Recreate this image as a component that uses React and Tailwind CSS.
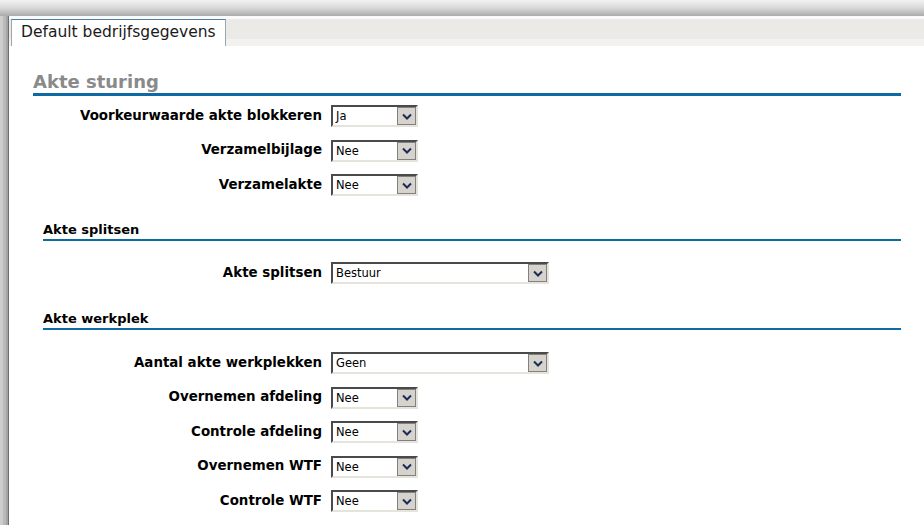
const font = { fontFamily: '"DejaVu Sans", Verdana, sans-serif' };

function Chevron() {
  return (
    <svg width="10" height="7" viewBox="0 0 10 7">
      <path d="M1 1.5 L5 5.5 L9 1.5" fill="none" stroke="#1c2c58" strokeWidth="2" />
    </svg>
  );
}

function Dropdown({ value, wide }) {
  return (
    <div
      className={`flex h-[22px] shrink-0 ${wide ? "w-[218px]" : "w-[87px]"} border-2 border-t-[#4a4a4a] border-l-[#4a4a4a] border-r-[#e6e3dc] border-b-[#e6e3dc] bg-white`}
    >
      <div className="flex-1 pl-[3px] text-[11.5px] leading-[18px] text-black">{value}</div>
      <div className="flex w-[19px] items-center justify-center border border-[#808080] bg-[#d6d3cc]">
        <Chevron />
      </div>
    </div>
  );
}

function Row({ label, value, wide }) {
  return (
    <div className="flex h-[22px] shrink-0 items-center">
      <div className="w-[322px] shrink-0 pr-[9px] text-right text-[13.4px] font-bold text-black">{label}</div>
      <Dropdown value={value} wide={wide} />
    </div>
  );
}

function SubHeading({ children }) {
  return (
    <div className="ml-[34px] mr-[23px] border-b-2 border-[#0f6aa3] text-[13px] font-bold leading-[18px] text-black">
      {children}
    </div>
  );
}

export default function App() {
  return (
    <div className="flex h-[525px] w-[924px] flex-col overflow-hidden bg-white" style={font}>
      <div className="h-[16px] shrink-0 bg-[linear-gradient(to_bottom,#f2f2f2,#d8d8d8_50%,#ababab)]" />
      <div className="flex min-h-0 flex-1 items-stretch">
        {/* window edge */}
        <div className="flex w-[8px] shrink-0 self-stretch">
          <div className="w-[3px] bg-[#cdcdcd]" />
          <div className="w-[3px] bg-[#bababa]" />
          <div className="w-[2px] bg-[#a4a4a4]" />
        </div>
        <div className="flex flex-1 flex-col border-l border-[#6e6e6e] bg-white">
          <div className="flex h-[30px] shrink-0 flex-col bg-[#fafafa] pt-[3px]">
            <div className="flex flex-1 items-stretch bg-[linear-gradient(to_bottom,#eceae6_75%,#f3f2ef_75%)]">
              <div className="ml-[2px] flex w-[215px] items-center border-x border-t border-[#9aa7b3] border-t-[#4d7fa6] bg-white pl-[9px] text-[15.5px] text-[#1a1a1a]">
                Default bedrijfsgegevens
              </div>
            </div>
          </div>

          <div className="ml-[24px] mr-[23px] mt-[26px] border-b-[3px] border-[#0f6aa3] pb-[1px] text-[18px] font-bold leading-[20px] text-[#8a8a8a]">
            Akte sturing
          </div>

          <div className="mt-[9px] flex flex-col gap-[12.5px]">
            <Row label="Voorkeurwaarde akte blokkeren" value="Ja" />
            <Row label="Verzamelbijlage" value="Nee" />
            <Row label="Verzamelakte" value="Nee" />
          </div>

          <div className="mt-[25px]">
            <SubHeading>Akte splitsen</SubHeading>
          </div>
          <div className="mt-[21px]">
            <Row label="Akte splitsen" value="Bestuur" wide />
          </div>

          <div className="mt-[26px]">
            <SubHeading>Akte werkplek</SubHeading>
          </div>
          <div className="mt-[22px] flex flex-col gap-[12.5px]">
            <Row label="Aantal akte werkplekken" value="Geen" wide />
            <Row label="Overnemen afdeling" value="Nee" />
            <Row label="Controle afdeling" value="Nee" />
            <Row label="Overnemen WTF" value="Nee" />
            <Row label="Controle WTF" value="Nee" />
          </div>
        </div>
      </div>
    </div>
  );
}
